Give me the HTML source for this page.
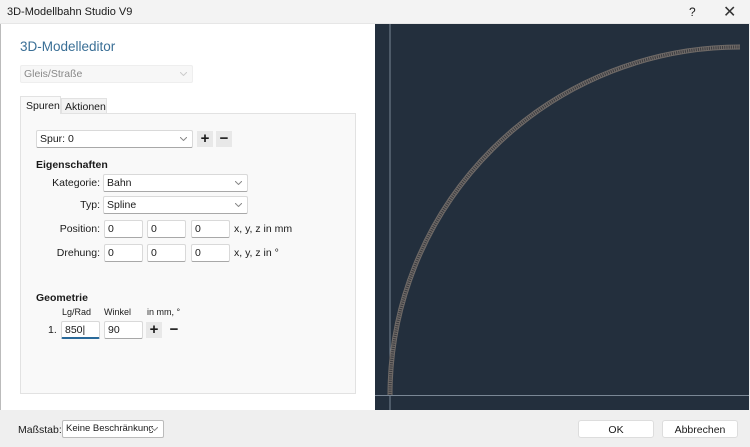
<!DOCTYPE html>
<html><head><meta charset="utf-8"><style>
*{box-sizing:border-box;margin:0;padding:0}
body{width:750px;height:447px;overflow:hidden;background:#efefef;font-family:"Liberation Sans",sans-serif;font-size:10.5px;color:#1a1a1a;position:relative}
.a{position:absolute;white-space:nowrap}
.box{position:absolute;background:#fff;border:1px solid #d9d9d9;border-bottom:1px solid #a8a8a8;border-radius:2px;padding:2px 0 0 3px;height:18px;font-size:10.5px;white-space:nowrap;overflow:hidden}
.chev{position:absolute;right:5px;top:6px;width:7px;height:4px}
.btn{position:absolute;width:16px;height:16px;background:#e8e8e8;text-align:center;font-size:15px;line-height:15px;font-weight:bold}
.lbl{position:absolute;text-align:right;font-size:10.5px}
</style></head><body>
<div class="a" style="left:0;top:0;width:750px;height:24px;background:#f3f3f3;border-bottom:1px solid #e6e6e6"></div>
<div class="a" style="left:7px;top:6px;font-size:11px">3D-Modellbahn Studio V9</div>
<div class="a" style="left:689px;top:5px;font-size:12px">?</div>
<div class="a" style="left:723px;top:2px;font-size:16px;color:#333">✕</div>
<div class="a" style="left:0;top:24px;width:375px;height:386px;background:#fff;border-left:1px solid #bbb"></div>
<div class="a" style="left:20px;top:39px;font-size:13.5px;color:#3a6f96">3D-Modelleditor</div>
<div class="box" style="left:20px;top:65px;width:173px;background:#f7f7f7;border-color:#eee;color:#888">Gleis/Straße<svg class="chev" viewBox="0 0 7 4"><path d="M0 0L3.5 3.5L7 0" fill="none" stroke="#ccc"/></svg></div>
<div class="a" style="left:20px;top:113px;width:336px;height:281px;background:#f9f9f9;border:1px solid #e2e2e2"></div>
<div class="a" style="left:20px;top:96px;width:41px;height:18px;background:#f9f9f9;border:1px solid #e2e2e2;border-bottom:none;padding:3px 0 0 5px">Spuren</div>
<div class="a" style="left:61px;top:98px;width:46px;height:15px;background:#f2f2f2;border:1px solid #e2e2e2;border-bottom:none;padding:2px 0 0 3px;overflow:hidden">Aktionen</div>
<div class="box" style="left:36px;top:130px;width:157px">Spur: 0<svg class="chev" viewBox="0 0 7 4"><path d="M0 0L3.5 3.5L7 0" fill="none" stroke="#888"/></svg></div>
<div class="btn" style="left:197px;top:131px">+</div>
<div class="btn" style="left:216px;top:131px">−</div>
<div class="a" style="left:36px;top:159px;font-weight:bold">Eigenschaften</div>
<div class="lbl" style="left:30px;width:70px;top:177px">Kategorie:</div>
<div class="box" style="left:103px;top:174px;width:145px">Bahn<svg class="chev" viewBox="0 0 7 4"><path d="M0 0L3.5 3.5L7 0" fill="none" stroke="#888"/></svg></div>
<div class="lbl" style="left:30px;width:70px;top:199px">Typ:</div>
<div class="box" style="left:103px;top:196px;width:145px">Spline<svg class="chev" viewBox="0 0 7 4"><path d="M0 0L3.5 3.5L7 0" fill="none" stroke="#888"/></svg></div>
<div class="lbl" style="left:30px;width:70px;top:223px">Position:</div>
<div class="box" style="left:104px;top:220px;width:39px">0</div>
<div class="box" style="left:147px;top:220px;width:39px">0</div>
<div class="box" style="left:191px;top:220px;width:39px">0</div>
<div class="a" style="left:234px;top:223px">x, y, z in mm</div>
<div class="lbl" style="left:30px;width:70px;top:247px">Drehung:</div>
<div class="box" style="left:104px;top:244px;width:39px">0</div>
<div class="box" style="left:147px;top:244px;width:39px">0</div>
<div class="box" style="left:191px;top:244px;width:39px">0</div>
<div class="a" style="left:234px;top:247px">x, y, z in °</div>
<div class="a" style="left:36px;top:292px;font-weight:bold">Geometrie</div>
<div class="a" style="left:62px;top:307px;font-size:9px">Lg/Rad</div>
<div class="a" style="left:104px;top:307px;font-size:9px">Winkel</div>
<div class="a" style="left:147px;top:307px;font-size:9px">in mm, °</div>
<div class="a" style="left:48px;top:324px">1.</div>
<div class="box" style="left:61px;top:321px;width:39px;border-bottom:2px solid #2a6a9a">850|</div>
<div class="box" style="left:104px;top:321px;width:39px">90</div>
<div class="btn" style="left:146px;top:322px">+</div>
<div class="btn" style="left:166px;top:322px;background:#f9f9f9">−</div>
<div class="a" style="left:375px;top:24px;width:374px;height:386px;background:#232f3d"></div>
<svg class="a" style="left:0;top:0" width="750" height="447">
<line x1="390" y1="24" x2="390" y2="410" stroke="#7a8795" stroke-width="1"/>
<line x1="375" y1="395.5" x2="749" y2="395.5" stroke="#7a8795" stroke-width="1"/>
<path d="M390 395 A350 348 0 0 1 740 47" fill="none" stroke="#6f6a67" stroke-width="5"/>
<path d="M390 395 A350 348 0 0 1 740 47" fill="none" stroke="#3a3b40" stroke-width="3" stroke-dasharray="1 1.2"/>
</svg>
<div class="a" style="left:18px;top:424px">Maßstab:</div>
<div class="box" style="left:62px;top:420px;width:102px;border-color:#bbb;font-size:9.5px">Keine Beschränkung<svg class="chev" viewBox="0 0 7 4" style="background:#fff"><path d="M0 0L3.5 3.5L7 0" fill="none" stroke="#888"/></svg></div>
<div class="a" style="left:578px;top:420px;width:76px;height:18px;background:#fff;border:1px solid #ddd;border-radius:3px;text-align:center;padding-top:3px">OK</div>
<div class="a" style="left:662px;top:420px;width:76px;height:18px;background:#fff;border:1px solid #ddd;border-radius:3px;text-align:center;padding-top:3px">Abbrechen</div>
</body></html>
